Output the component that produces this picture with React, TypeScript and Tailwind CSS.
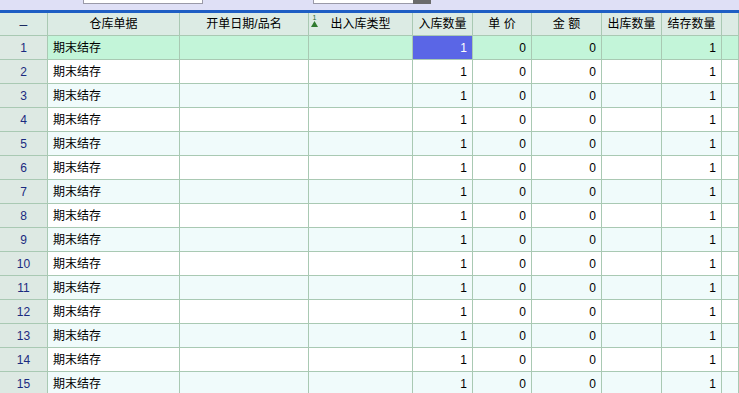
import React from "react";

const cols = [48, 132, 129, 104, 60, 59, 70, 60, 60, 17];
const headers = ["–", "仓库单据", "开单日期/品名", "出入库类型", "入库数量", "单 价", "金 额", "出库数量", "结存数量", ""];

export default function App() {
  const rows = Array.from({ length: 15 }, (_, i) => i + 1);
  return (
    <div
      className="w-[739px] h-[393px] overflow-hidden bg-white text-[12px] text-black"
      style={{ fontFamily: '"Liberation Sans", "Noto Sans CJK SC", sans-serif' }}
    >
      {/* top toolbar strip */}
      <div className="h-[10px] bg-[#dfe0f6] flex items-start">
        <div className="w-[83px]" />
        <div className="w-[120px] h-[4px] bg-white border-b border-l border-r border-[#9a9aa8]" />
        <div className="w-[110px]" />
        <div className="w-[100px] h-[4px] bg-white border-b border-l border-[#9a9aa8]" />
        <div className="w-[18px] h-[4px] bg-[#6b6b6b]" />
      </div>
      <div className="h-[3px] bg-[#1e5ec4]" />
      {/* header */}
      <div className="flex h-[23px] bg-[#dcebe4] border-b border-[#a9c9b3]">
        {cols.map((w, i) => (
          <div
            key={i}
            style={{ width: w }}
            className="relative shrink-0 h-full border-r border-[#a9c9b3] flex items-center justify-center"
          >
            {i === 3 && (
              <div className="absolute left-[2px] top-[1px] flex flex-col items-center leading-none">
                <span className="text-[7px] text-[#2d6a2d]">1</span>
                <svg width="7" height="6" viewBox="0 0 7 6">
                  <polygon points="3.5,0 7,6 0,6" fill="#2f7a2f" />
                </svg>
              </div>
            )}
            <span className={i === 0 ? "text-[14px] text-[#1a2a60]" : ""}>{headers[i]}</span>
          </div>
        ))}
      </div>
      {rows.map((r) => {
        const sel = r === 1;
        const rowBg = sel ? "bg-[#c3f5d9]" : r % 2 === 1 ? "bg-[#f0fbfb]" : "bg-white";
        return (
          <div key={r} className={`flex h-[24px] border-b border-[#a9c9b3] ${rowBg}`}>
            {cols.map((w, i) => {
              let content: React.ReactNode = null;
              let cls = "";
              if (i === 0) {
                cls = "bg-[#dde9e3] justify-center text-[#1a2a80]";
                content = r;
              } else if (i === 1) {
                cls = "justify-start pl-[5px]";
                content = "期末结存";
              } else if (i === 4) {
                cls = sel ? "bg-[#5a66e6] text-white justify-end pr-[5px]" : "justify-end pr-[5px]";
                content = "1";
              } else if (i === 5 || i === 6) {
                cls = "justify-end pr-[5px]";
                content = "0";
              } else if (i === 8) {
                cls = "justify-end pr-[5px]";
                content = "1";
              }
              return (
                <div
                  key={i}
                  style={{ width: w }}
                  className={`shrink-0 h-full border-r border-[#a9c9b3] flex items-center ${cls}`}
                >
                  {content}
                </div>
              );
            })}
          </div>
        );
      })}
    </div>
  );
}
